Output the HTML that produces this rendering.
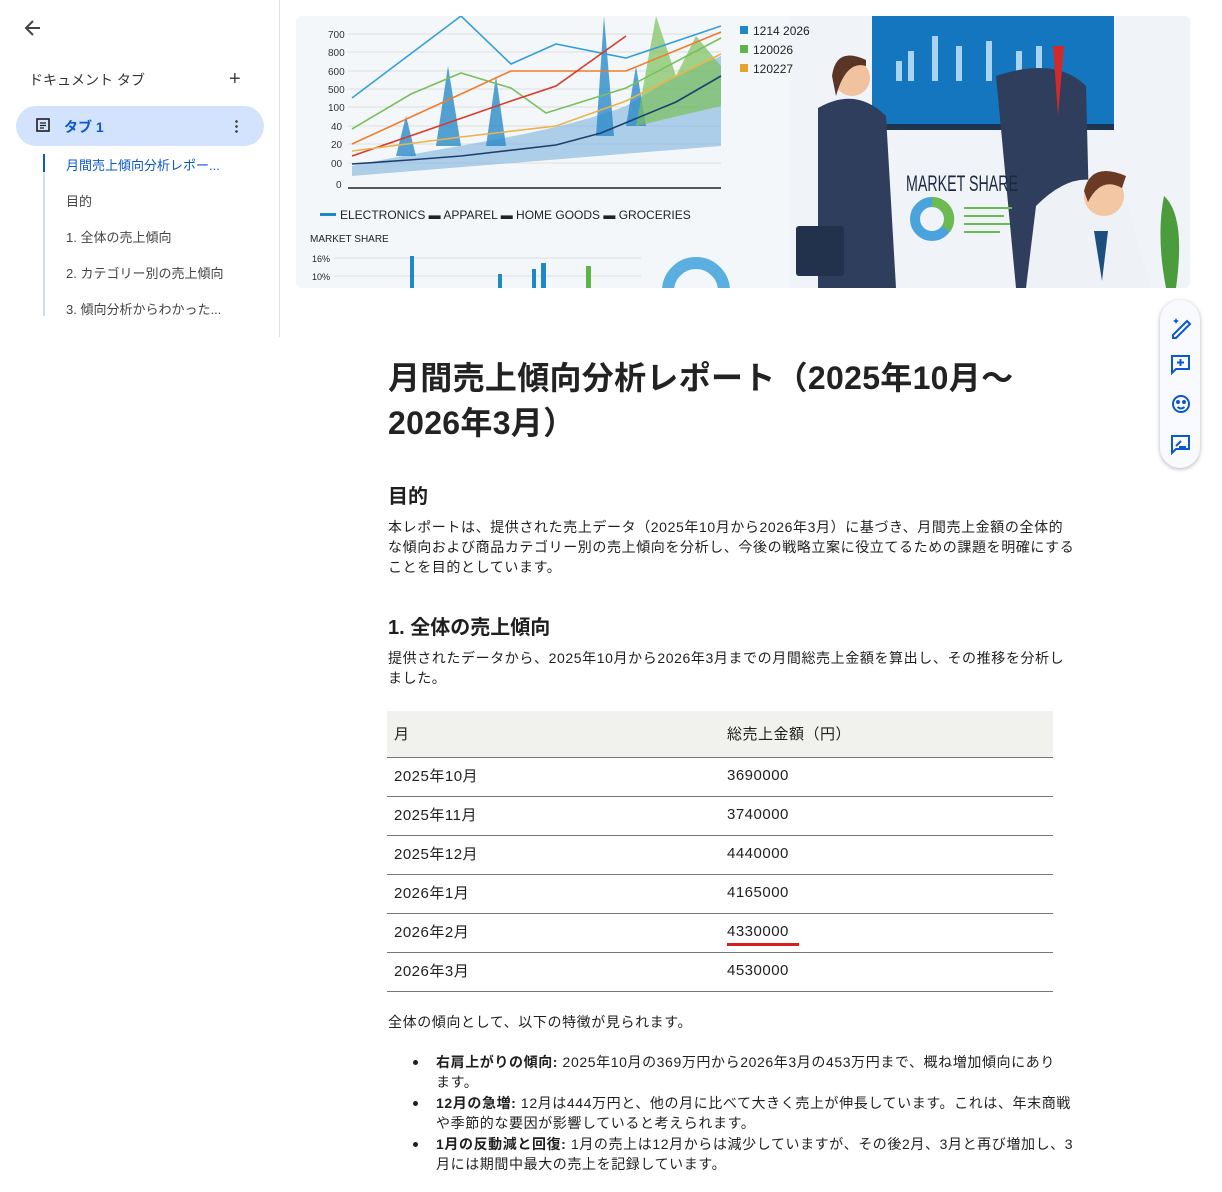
<!DOCTYPE html>
<html><head><meta charset="utf-8"><style>
*{margin:0;padding:0;box-sizing:border-box}
body{width:1222px;height:1192px;overflow:hidden;background:#fff;font-family:"Liberation Sans","Noto Sans CJK JP",sans-serif;color:#1f1f1f;position:relative}
.abs{position:absolute}
.side{left:0;top:0;width:280px;height:337px;border-right:1px solid #e0e0e0}
.nav{font-size:13px;color:#444;position:absolute;left:66px}
.doc{left:388px;width:760px}
p{font-size:14px;line-height:20px;letter-spacing:0.6px;white-space:nowrap}
table{border-collapse:collapse;width:666px;font-size:15px;letter-spacing:0.5px}
td{height:39px;border-bottom:1px solid #777;padding-left:7px;padding-bottom:3px}
th{height:46px;background:#f1f1ee;text-align:left;font-weight:normal;padding-left:7px;border-bottom:1px solid #777}
ul{list-style:none}
li{position:relative;padding-left:48px;font-size:14px;line-height:20px;margin-bottom:1px;letter-spacing:0.6px;white-space:nowrap}
li:before{content:"";position:absolute;left:25px;top:8px;width:5px;height:5px;border-radius:50%;background:#1f1f1f}
</style></head><body>
<div class="abs side">
<svg class="abs" style="left:23px;top:18px" width="20" height="20" viewBox="0 0 20 20"><path d="M17 10H4M10 3L3 10l7 7" stroke="#444" stroke-width="2" fill="none"/></svg>
<div class="abs" style="left:29px;top:70px;font-size:14px;color:#333">ドキュメント タブ</div>
<div class="abs" style="left:229px;top:68px;font-size:20px;color:#444">+</div>
<div class="abs" style="left:16px;top:106px;width:248px;height:40px;border-radius:20px;background:#d3e3fd"></div>
<svg class="abs" style="left:36px;top:118px" width="14" height="14" viewBox="0 0 14 14"><rect x="1" y="1" width="12" height="12" stroke="#1f1f1f" stroke-width="1.6" fill="none"/><path d="M4 5h6M4 7.5h6M4 10h4" stroke="#1f1f1f" stroke-width="1.3"/></svg>
<div class="abs" style="left:64px;top:117px;font-size:14px;color:#0b57d0;font-weight:bold">タブ 1</div>
<div class="abs" style="left:235px;top:119px;width:3px;height:14px;background:radial-gradient(circle,#444 1.2px,transparent 1.5px) 0 0/3px 5px"></div>
<div class="abs" style="left:43px;top:154px;width:2px;height:162px;background:#d3dcea"></div>
<div class="abs" style="left:43px;top:154px;width:2px;height:18px;background:#0b57d0"></div>
<div class="nav" style="top:155px;color:#0b57d0">月間売上傾向分析レポー...</div>
<div class="nav" style="top:191px">目的</div>
<div class="nav" style="top:227px">1. 全体の売上傾向</div>
<div class="nav" style="top:263px">2. カテゴリー別の売上傾向</div>
<div class="nav" style="top:299px">3. 傾向分析からわかった...</div>
</div>

<svg class="abs" style="left:296px;top:16px" width="894" height="272" viewBox="0 0 894 272">
<defs><clipPath id="c"><rect width="894" height="272" rx="6"/></clipPath></defs>
<g clip-path="url(#c)">
<rect width="894" height="272" fill="#f4f7fa"/>
<rect x="494" width="400" height="272" fill="#f0f3f7"/>
<g stroke="#ddd" stroke-width="1"><path d="M52 18H425M52 36H425M52 55H425M52 73H425M52 91H425M52 110H425M52 128H425M52 147H425"/></g>
<path d="M52 172H425" stroke="#222" stroke-width="1.5"/>
<g font-size="10" fill="#333" font-family="Liberation Sans"><text x="32" y="22">700</text><text x="32" y="40">800</text><text x="32" y="59">600</text><text x="32" y="77">500</text><text x="32" y="95">100</text><text x="35" y="114">40</text><text x="35" y="132">20</text><text x="35" y="151">00</text><text x="40" y="172">0</text></g>
<path d="M56 150 C150 130 250 120 330 90 L380 60 L425 40 V130 L56 160Z" fill="#7db3dd" opacity=".6"/>
<path d="M100 140 L110 100 L120 140 M140 130 L152 50 L165 130 M190 130 L200 60 L210 130 M300 120 L308 0 L318 120 M330 110 L340 50 L350 110" fill="#2a8ac9" opacity=".8"/>
<path d="M340 110 L360 0 L380 60 L400 20 L425 50 V90 L340 110Z" fill="#7ac05a" opacity=".7"/>
<polyline points="56,82 165,0 215,48 260,28 330,42 425,10" fill="none" stroke="#36a0d6" stroke-width="1.6"/>
<polyline points="56,113 115,78 165,57 215,72 250,97 330,72 425,22" fill="none" stroke="#79c05c" stroke-width="1.6"/>
<polyline points="56,128 165,78 215,55 260,55 330,55 425,16" fill="none" stroke="#f07c2a" stroke-width="1.6"/>
<polyline points="56,140 120,118 215,85 260,70 330,20" fill="none" stroke="#d93a2a" stroke-width="1.6"/>
<polyline points="56,135 165,121 260,110 330,85 425,38" fill="none" stroke="#e9b44c" stroke-width="1.6"/>
<polyline points="56,148 113,144 165,140 260,129 305,117 380,86 425,60" fill="none" stroke="#1e3f6e" stroke-width="1.6"/>
<rect x="444" y="10" width="8" height="8" fill="#1e88c8"/><rect x="444" y="29" width="8" height="8" fill="#5db54a"/><rect x="444" y="48" width="8" height="8" fill="#e3a530"/>
<g font-size="12" fill="#222" font-family="Liberation Sans"><text x="457" y="19">1214 2026</text><text x="457" y="38">120026</text><text x="457" y="57">120227</text>
<text x="44" y="203" font-size="12">ELECTRONICS ▬ APPAREL ▬ HOME GOODS ▬ GROCERIES</text>
<text x="14" y="226" font-size="10">MARKET SHARE</text><text x="16" y="246" font-size="9">16%</text><text x="16" y="264" font-size="9">10%</text></g>
<rect x="24" y="197" width="16" height="3" fill="#1e88c8"/>
<path d="M38 242H345M38 260H345" stroke="#ddd"/>
<g fill="#1e88c8"><rect x="114" y="240" width="4" height="32"/><rect x="245" y="247" width="5" height="25"/><rect x="236" y="253" width="4" height="19"/><rect x="202" y="258" width="4" height="14"/></g>
<rect x="290" y="250" width="5" height="22" fill="#5db54a"/>
<circle cx="400" cy="275" r="28" fill="none" stroke="#5aaee0" stroke-width="12"/>
<rect x="576" width="242" height="112" fill="#1576c0"/><rect x="576" y="108" width="242" height="6" fill="#1f3450"/>
<g fill="#a9d3f2"><rect x="600" y="45" width="6" height="20"/><rect x="612" y="35" width="6" height="30"/><rect x="636" y="20" width="6" height="45"/><rect x="660" y="30" width="6" height="35"/><rect x="690" y="25" width="6" height="40"/><rect x="720" y="35" width="6" height="30"/><rect x="740" y="30" width="6" height="35"/></g>
<path d="M522 92 Q560 70 590 100 L600 272 H522Z" fill="#2e3e5c"/>
<circle cx="556" cy="62" r="18" fill="#f0c2a0"/><path d="M536 60 Q540 30 570 44 L570 50 Q550 44 540 80Z" fill="#5a3424"/>
<path d="M700 60 Q760 40 790 70 L795 272 H720Z" fill="#2e3e5c"/>
<path d="M757 30 L762 100 L768 30Z" fill="#d02a2a"/>
<rect x="500" y="210" width="48" height="50" rx="3" fill="#22324d"/>
<text x="610" y="175" font-size="22" fill="#1c2a40" font-family="Liberation Sans Narrow,Liberation Sans" textLength="112" lengthAdjust="spacingAndGlyphs">MARKET SHARE</text>
<circle cx="636" cy="203" r="17" fill="none" stroke="#4aa3dd" stroke-width="10"/><path d="M636 186 A17 17 0 0 1 650 213" fill="none" stroke="#6cbb50" stroke-width="10"/>
<path d="M668 192h48M668 200h40M668 208h46M668 216h36" stroke="#6cbb50" stroke-width="2"/>
<path d="M740 190 Q790 140 830 185 L855 272 H730Z" fill="#eef2f7"/>
<circle cx="808" cy="180" r="20" fill="#f3c6a4"/><path d="M788 175 Q795 145 830 160 L826 172 Q805 160 792 186Z" fill="#6b3a24"/>
<path d="M798 215 L806 265 L812 215Z" fill="#1d4e80"/>
<path d="M868 180 Q890 200 880 272 L870 272 Q860 220 868 180Z" fill="#4a9c3c"/>
</g></svg>

<div class="abs" style="left:1160px;top:300px;width:40px;height:168px;border-radius:20px;background:#f8faff;box-shadow:0 1px 4px rgba(0,0,0,.3)">
<svg width="40" height="168" viewBox="0 0 40 168" fill="none" stroke="#0b57d0" stroke-width="2"><path d="M13 35 L27 21 L30 24 L16 38 H13Z"/><path d="M16 18l1 2 2 1-2 1-1 2-1-2-2-1 2-1z" fill="#0b57d0" stroke="none"/><path d="M12 56h17v13H16l-4 4Z M20.5 59v7M17 62.5h7"/><circle cx="21" cy="104" r="8"/><circle cx="18" cy="102" r="1" fill="#0b57d0"/><circle cx="24" cy="102" r="1" fill="#0b57d0"/><path d="M17.5 107q3.5 3 7 0"/><path d="M12 136h17v13H16l-4 4Z M16 146l5-5 M19 147h7"/></svg></div>

<div class="abs doc">
<div class="abs" style="top:356px;font-size:32px;font-weight:bold;line-height:45px;width:680px;color:#222;letter-spacing:0.3px">月間売上傾向分析レポート（2025年10月～2026年3月）</div>
<div class="abs" style="top:480px;font-size:20px;font-weight:bold">目的</div>
<p class="abs" style="top:517px">本レポートは、提供された売上データ（2025年10月から2026年3月）に基づき、月間売上金額の全体的<br>な傾向および商品カテゴリー別の売上傾向を分析し、今後の戦略立案に役立てるための課題を明確にする<br>ことを目的としています。</p>
<div class="abs" style="top:611px;font-size:20px;font-weight:bold">1. 全体の売上傾向</div>
<p class="abs" style="top:648px">提供されたデータから、2025年10月から2026年3月までの月間総売上金額を算出し、その推移を分析し<br>ました。</p>
<table class="abs" style="top:711px;left:-1px">
<tr><th style="width:333px">月</th><th>総売上金額（円）</th></tr>
<tr><td>2025年10月</td><td>3690000</td></tr>
<tr><td>2025年11月</td><td>3740000</td></tr>
<tr><td>2025年12月</td><td>4440000</td></tr>
<tr><td>2026年1月</td><td>4165000</td></tr>
<tr><td>2026年2月</td><td><span style="border-bottom:3px solid #d6201f;padding-bottom:3px;padding-right:10px">4330000</span></td></tr>
<tr><td>2026年3月</td><td>4530000</td></tr>
</table>
<p class="abs" style="top:1012px">全体の傾向として、以下の特徴が見られます。</p>
<ul class="abs" style="top:1052px">
<li><b>右肩上がりの傾向:</b> 2025年10月の369万円から2026年3月の453万円まで、概ね増加傾向にあり<br>ます。</li>
<li><b>12月の急増:</b> 12月は444万円と、他の月に比べて大きく売上が伸長しています。これは、年末商戦<br>や季節的な要因が影響していると考えられます。</li>
<li><b>1月の反動減と回復:</b> 1月の売上は12月からは減少していますが、その後2月、3月と再び増加し、3<br>月には期間中最大の売上を記録しています。</li>
</ul>
</div>
</body></html>
